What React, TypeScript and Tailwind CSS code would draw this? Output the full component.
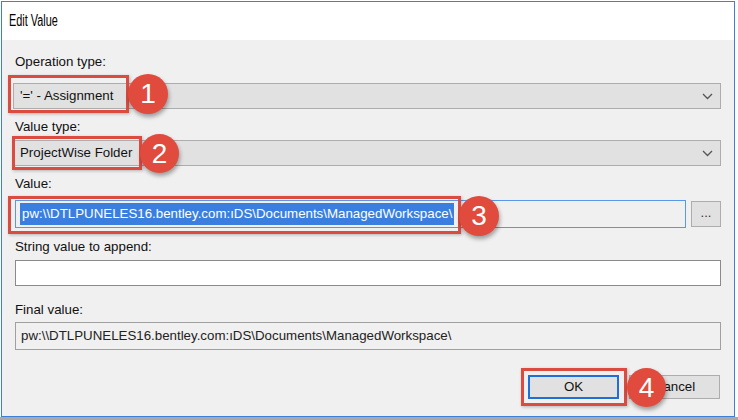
import React from "react";

const FONT = { fontFamily: '"Liberation Sans", Arial, sans-serif' };

function Chevron() {
  return (
    <svg width="11" height="7" viewBox="0 0 11 7" className="shrink-0">
      <polyline points="1,1 5.5,5.5 10,1" fill="none" stroke="#555" strokeWidth="1.3" />
    </svg>
  );
}

function Select({ value }: { value: string }) {
  return (
    <div className="h-[26px] flex items-center justify-between border border-[#adadad] bg-[#e1e1e1] pl-[6px] pr-[7px]">
      <span className="text-[13.3px] text-[#111]">{value}</span>
      <Chevron />
    </div>
  );
}

function Label({ text, className }: { text: string; className: string }) {
  return <div className={`pl-[2px] text-[13.3px] leading-[16px] text-[#111] ${className}`}>{text}</div>;
}

function Callout({ n, className }: { n: number; className: string }) {
  return (
    <div
      className={`absolute rounded-full bg-[#e04b3e] text-white flex items-center justify-center text-[28px] shadow-[1px_3px_4px_rgba(0,0,0,0.35)] ${className}`}
    >
      {n}
    </div>
  );
}

const PATH = "pw:\\\\DTLPUNELES16.bentley.com:\u0131DS\\Documents\\ManagedWorkspace\\";

export default function App() {
  return (
    <div className="relative w-[738px] h-[420px] bg-white overflow-hidden" style={FONT}>
      <div className="ml-[1px] mt-[1px] w-[734px] h-[416px] border border-[#3d7fd9] flex flex-col">
        {/* title bar */}
        <div className="h-[38px] bg-white flex items-center pl-[7px]">
          <span className="inline-block text-[16px] text-black origin-left scale-x-[0.68]">Edit Value</span>
        </div>

        {/* body */}
        <div className="flex-1 bg-[#f0f0f0] pl-[11px] pr-[13px] flex flex-col">
          <Label text="Operation type:" className="mt-[14px]" />
          <div className="mt-[13px]">
            <Select value="'=' - Assignment" />
          </div>

          <Label text="Value type:" className="mt-[10px]" />
          <div className="mt-[5px]">
            <Select value="ProjectWise Folder" />
          </div>

          <Label text="Value:" className="mt-[10px]" />
          <div className="mt-[8px] flex items-center gap-[5px] pl-[2px]">
            <div className="flex-1 h-[28px] border border-[#5b97e8] bg-[#f0f0f0] flex items-center pl-[4px]">
              <span className="bg-[#3a7fdf] text-white text-[13.3px] leading-[22px] px-[2px]">{PATH}</span>
            </div>
            <div className="w-[30px] h-[26px] border border-[#adadad] bg-[#e1e1e1] flex items-center justify-center text-[13px] text-[#333] pb-[2px]">
              ...
            </div>
          </div>

          <Label text="String value to append:" className="mt-[11px]" />
          <div className="mt-[5px] ml-[2px] h-[26px] border border-[#8a8a8a] bg-white" />

          <Label text="Final value:" className="mt-[16px]" />
          <div className="mt-[4px] ml-[2px] h-[28px] border border-[#a0a0a0] bg-[#f0f0f0] flex items-center pl-[5px]">
            <span className="text-[13.3px] text-[#222]">{PATH}</span>
          </div>

          <div className="mt-[25px] flex justify-end gap-[10px] pr-[1px]">
            <div className="w-[91px] h-[24px] border-2 border-[#1f6fd6] bg-[#e1e1e1] flex items-center justify-center text-[13.3px] text-[#111]">
              OK
            </div>
            <div className="w-[91px] h-[24px] border border-[#adadad] bg-[#e1e1e1] flex items-center justify-center text-[13.3px] text-[#111]">
              Cancel
            </div>
          </div>
        </div>
      </div>
      <div className="h-[3px] bg-[#a9a9a9]" />

      {/* annotation boxes */}
      <div className="absolute left-[8px] top-[75px] w-[121px] h-[38px] border-[3px] border-[#dc4b40] shadow-[1px_1px_3px_rgba(0,0,0,0.25)]" />
      <div className="absolute left-[12px] top-[136px] w-[130px] h-[34px] border-[3px] border-[#dc4b40] shadow-[1px_1px_3px_rgba(0,0,0,0.25)]" />
      <div className="absolute left-[8px] top-[196px] w-[453px] h-[38px] border-[3px] border-[#dc4b40] shadow-[1px_1px_3px_rgba(0,0,0,0.25)]" />
      <div className="absolute left-[521px] top-[368px] w-[106px] h-[38px] border-[3px] border-[#dc4b40] shadow-[1px_1px_3px_rgba(0,0,0,0.25)]" />

      {/* numbered callouts */}
      <Callout n={1} className="left-[128px] top-[74px] w-[40px] h-[40px]" />
      <Callout n={2} className="left-[140px] top-[134px] w-[39px] h-[39px]" />
      <Callout n={3} className="left-[459px] top-[196px] w-[40px] h-[40px]" />
      <Callout n={4} className="left-[627px] top-[368px] w-[39px] h-[39px]" />
    </div>
  );
}
